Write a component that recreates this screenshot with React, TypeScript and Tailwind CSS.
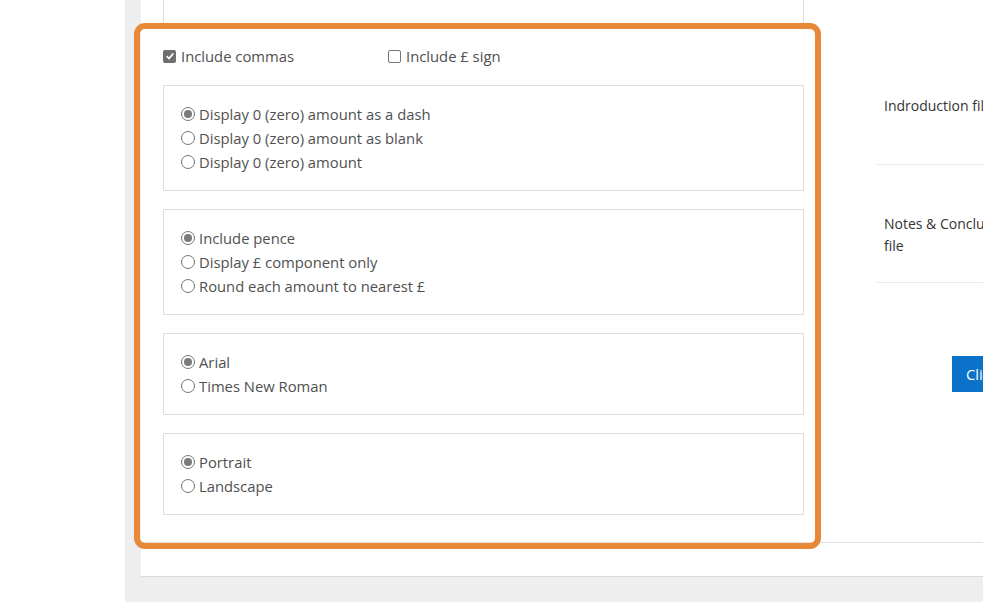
import React from 'react';

function Check({ checked }: { checked?: boolean }) {
  return checked ? (
    <span className="flex h-[13px] w-[13px] items-center justify-center rounded-[2px] bg-[#6e6e6e]">
      <svg viewBox="0 0 12 12" className="h-[10px] w-[10px]">
        <path d="M2 6.2 L4.8 9 L10 3" fill="none" stroke="white" strokeWidth="2" />
      </svg>
    </span>
  ) : (
    <span className="h-[13px] w-[13px] rounded-[2px] border border-[#767676] bg-white" />
  );
}

function Radio({ checked }: { checked?: boolean }) {
  return (
    <span className="flex h-[14px] w-[14px] shrink-0 items-center justify-center rounded-full border border-[#767676] bg-white">
      {checked && <span className="h-[8px] w-[8px] rounded-full bg-[#7a7a7a]" />}
    </span>
  );
}

function Group({ options }: { options: string[] }) {
  return (
    <div className="border border-[#dddddd] py-4 pl-[17px]">
      {options.map((o, i) => (
        <div key={o} className="flex h-6 items-center gap-[4px]">
          <Radio checked={i === 0} />
          <span>{o}</span>
        </div>
      ))}
    </div>
  );
}

export default function App() {
  return (
    <div
      className="relative flex h-[602px] w-[983px] overflow-hidden bg-white text-[14.8px] text-[#505050]"
      style={{ fontFamily: '"Open Sans", sans-serif' }}
    >
      <div className="w-[125px] shrink-0 bg-white" />
      <div className="flex-1 bg-[#efeeee] pl-4">
        <div className="h-[577px] border-b border-[#dadada] bg-white">
          <div className="flex h-[543px] border-b border-[#e2e2e2]">
            <div className="w-[679px] shrink-0 pl-[22px] pr-[16px]">
              <div className="h-[25px] border-x border-b border-[#dddddd]" />
              <div className="mt-[19px] flex h-6 items-center">
                <label className="flex w-[225px] items-center gap-[5px]">
                  <Check checked />
                  <span>Include commas</span>
                </label>
                <label className="flex items-center gap-[5px]">
                  <Check />
                  <span>Include £ sign</span>
                </label>
              </div>
              <div className="mt-[17px] space-y-[18px]">
                <Group
                  options={[
                    'Display 0 (zero) amount as a dash',
                    'Display 0 (zero) amount as blank',
                    'Display 0 (zero) amount',
                  ]}
                />
                <Group
                  options={[
                    'Include pence',
                    'Display £ component only',
                    'Round each amount to nearest £',
                  ]}
                />
                <Group options={['Arial', 'Times New Roman']} />
                <div className="!mt-[17px]">
                  <Group options={['Portrait', 'Landscape']} />
                </div>
              </div>
            </div>
            <div className="ml-[57px] flex-1 overflow-hidden whitespace-nowrap text-[14px]">
              <div className="mt-[47px] h-[118px] border-b border-[#e8e8e8] pl-[7px] pt-[48px] leading-[22px] text-[#333]">
                Indroduction file
              </div>
              <div className="h-[118px] border-b border-[#e8e8e8] pl-[7px] pt-[48px] leading-[22px] text-[#333]">
                Notes &amp; Conclusion
                <br />
                file
              </div>
              <div className="pl-[75px] pt-[73px]">
                <button className="h-[36px] bg-[#0b72c9] px-[14px] text-[14.8px] text-white">Click to upload</button>
              </div>
            </div>
          </div>
        </div>
      </div>
      <div className="pointer-events-none absolute left-[134px] top-[23px] h-[526px] w-[687px] rounded-[11px] border-[6px] border-[#e8893a]" />
    </div>
  );
}
